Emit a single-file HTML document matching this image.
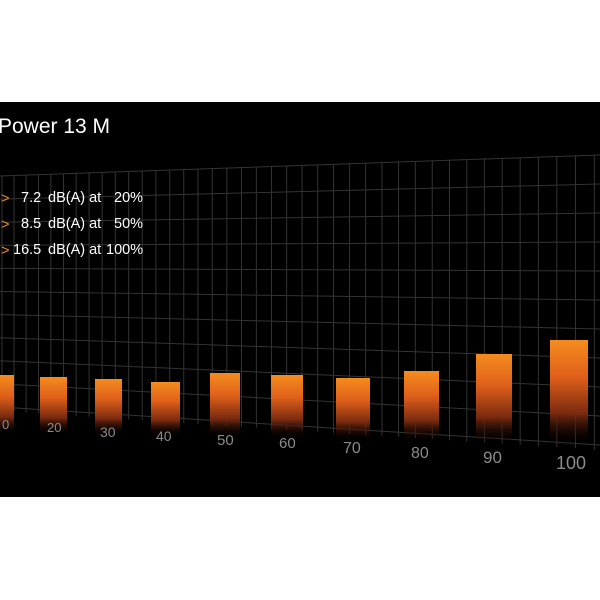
<!DOCTYPE html><html><head><style>body{margin:0;background:#fff;width:600px;height:600px;overflow:hidden;font-family:"Liberation Sans",sans-serif}</style></head><body>
<svg width="600" height="600" xmlns="http://www.w3.org/2000/svg" style="position:absolute;left:0;top:0">
<defs><linearGradient id="g" x1="0" y1="0" x2="0" y2="1"><stop offset="0" stop-color="#f58c1e"/><stop offset="0.35" stop-color="#e0601a"/><stop offset="0.7" stop-color="#7a2a10"/><stop offset="1" stop-color="#000" stop-opacity="0"/></linearGradient></defs>
<rect x="0" y="102" width="600" height="395" fill="#000"/>
<g id="grid" stroke="#333" stroke-width="1"></g>
<g fill="url(#g)">
<rect x="0" y="375" width="14" height="60"/>
<rect x="40" y="377" width="27" height="58"/>
<rect x="95" y="379" width="27" height="57"/>
<rect x="151" y="382" width="29" height="55"/>
<rect x="210" y="373" width="30" height="65"/>
<rect x="271" y="375" width="32" height="64"/>
<rect x="336" y="378" width="34" height="63"/>
<rect x="404" y="371" width="35" height="71"/>
<rect x="476" y="354" width="36" height="90"/>
<rect x="550" y="340" width="38" height="105"/>
</g>
<g fill="#8a8a8a">
<text x="2" y="429" font-size="13">0</text>
<text x="47" y="432" font-size="13">20</text>
<text x="100" y="437" font-size="14">30</text>
<text x="156" y="441" font-size="14">40</text>
<text x="217" y="445" font-size="15">50</text>
<text x="279" y="448" font-size="15">60</text>
<text x="343" y="453" font-size="16">70</text>
<text x="411" y="458" font-size="16">80</text>
<text x="483" y="463" font-size="17">90</text>
<text x="556" y="469" font-size="18">100</text>
</g>
<text x="-2" y="133" font-size="21" fill="#fff">Power 13 M</text>
<g font-size="14.5" fill="#fff">
<text x="1" y="203" fill="#f08a24">&gt;</text><text x="21" y="202">7.2</text><text x="48" y="202">dB(A) at</text><text x="114" y="202">20%</text>
<text x="1" y="229" fill="#f08a24">&gt;</text><text x="21" y="228">8.5</text><text x="48" y="228">dB(A) at</text><text x="114" y="228">50%</text>
<text x="1" y="255" fill="#f08a24">&gt;</text><text x="13" y="254">16.5</text><text x="48" y="254">dB(A) at</text><text x="106" y="254">100%</text>
</g>
</svg>
<script>
(function(){
var g=document.getElementById('grid'),ns='http://www.w3.org/2000/svg';
function L(a,b,c,d){var l=document.createElementNS(ns,'line');l.setAttribute('x1',a);l.setAttribute('y1',b);l.setAttribute('x2',c);l.setAttribute('y2',d);g.appendChild(l);}
function tp(x){return 176-x*0.035;}function bt(x){return 407+x*0.065;}
var x=2,s=12;while(x<600){L(x,tp(x),x,bt(x)+4);x+=s;s*=1.012;}
for(var i=0;i<=10;i++){var t=i/10;L(0,176+t*231,600,155+t*290);}
})();
</script>
</body></html>
